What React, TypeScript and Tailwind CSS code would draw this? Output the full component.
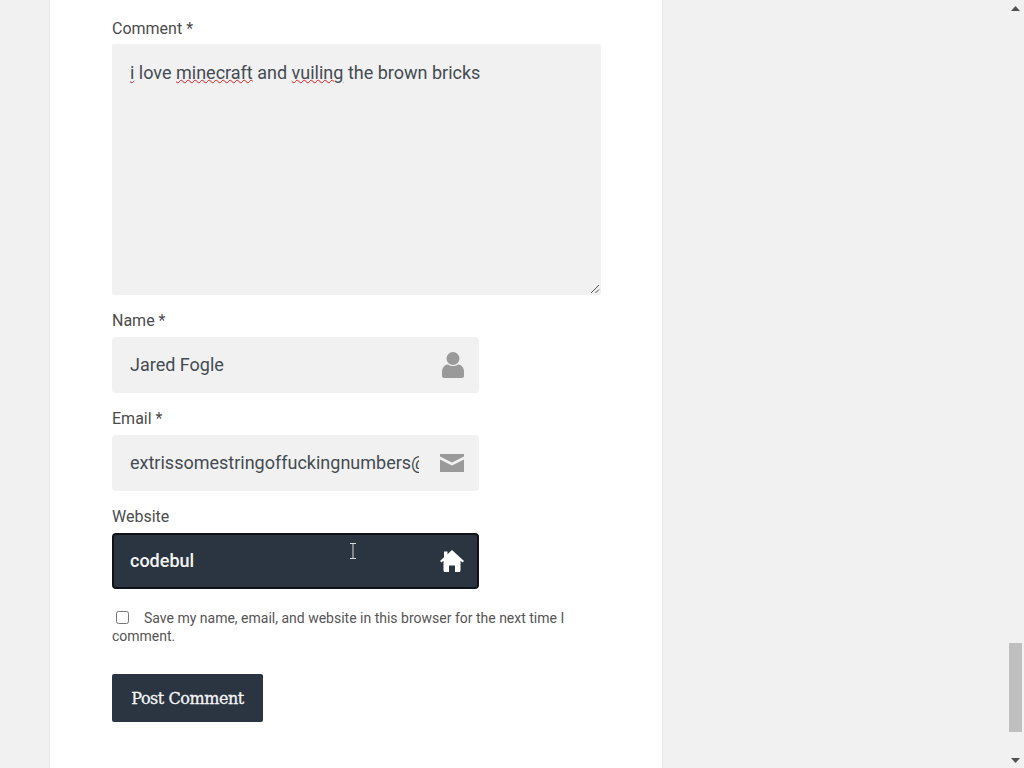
import React from "react";

const font = { fontFamily: '"Roboto", sans-serif' };

function Field({ label, value, icon, dark }: { label: string; value: string; icon: React.ReactNode; dark?: boolean }) {
  return (
    <div className="flex flex-col">
      <div className="h-[24px] text-[16px] leading-[24px] text-[#4b4b4b] mb-[4px]">{label}</div>
      <div
        className={
          dark
            ? "w-[367px] h-[56px] rounded-[4px] border-2 border-[#0f1216] bg-[#2a3541] pl-[16px] flex items-center relative"
            : "w-[367px] h-[56px] rounded-[4px] bg-[#f1f1f1] pl-[18px] flex items-center relative"
        }
      >
        <div className={dark ? "w-[289px] pb-[2px] overflow-hidden whitespace-nowrap text-[18px] font-medium text-[#f5f5f5]" : "w-[289px] pb-[2px] overflow-hidden whitespace-nowrap text-[18px] text-[#444b52]"}>
          {value}
        </div>
        <div className={dark ? "absolute right-[13px] top-0 bottom-0 flex items-center" : "absolute right-[15px] top-0 bottom-0 flex items-center"}>{icon}</div>
      </div>
    </div>
  );
}

const squiggle = "underline decoration-wavy decoration-[#e02020] decoration-[1px] underline-offset-[0px]";

export default function App() {
  return (
    <div className="flex h-[768px] w-[1024px] overflow-hidden bg-[#f1f1f1]" style={font}>
      <div className="flex-1 pl-[49px]">
        <div className="w-[614px] h-[768px] bg-white border-x border-[#e9e9e9] pl-[62px] pt-[17px] relative">
          <div className="h-[24px] text-[16px] leading-[24px] text-[#4b4b4b] mb-[3px]">Comment *</div>
          <div className="w-[489px] h-[251px] bg-[#f1f1f1] rounded-[2px] pl-[18px] pt-[15px] text-[18px] leading-[27px] text-[#444b52] relative">
            <span className={squiggle}>i</span>{" "}love{" "}
            <span className={squiggle}>minecraft</span>{" "}and{" "}
            <span className={squiggle}>vuiling</span>{" "}the brown bricks
            <svg className="absolute right-[1px] bottom-[1px]" width="10" height="10" viewBox="0 0 10 10" fill="none" stroke="#555" strokeWidth="1">
              <path d="M1 9L9 1M5.5 9L9 5.500" />
            </svg>
          </div>
          <div className="flex flex-col gap-[14px] mt-[14px]">
            <Field
              label="Name *"
              value="Jared Fogle"
              icon={
                <svg width="22" height="26" viewBox="0 0 22 26" fill="#9a9a9a">
                  <circle cx="11" cy="6.500" r="6.500" />
                  <path d="M0 20c0-4 2-7 6-7.500 1.500 1 3.200 1.500 5 1.500s3.500-.5 5-1.500c4 .5 6 3.500 6 7.500v4c0 1-1 2-2 2H2c-1 0-2-1-2-2z" />
                </svg>
              }
            />
            <Field
              label="Email *"
              value="extrissomestringoffuckingnumbers@gmail.com"
              icon={
                <svg width="24" height="18" viewBox="0 0 24 18" fill="#9a9a9a">
                  <path d="M0 0h24v2.500L12 8.500 0 2.500z" />
                  <path d="M0 5.500l12 6 12-6V18H0z" />
                </svg>
              }
            />
            <Field
              dark
              label="Website"
              value="codebul"
              icon={
                <svg width="24" height="22" viewBox="0 0 24 22" fill="#ffffff">
                  <path d="M12 0L24 11 22.500 12.500 20.500 10.700V20.500c0 .8-.5 1.500-1.500 1.500h-4v-6.500h-6V22H5c-1 0-1.500-.7-1.500-1.500V10.700L1.500 12.500 0 11 4 7.300V1.500h3.500v2.700z" />
                </svg>
              }
            />
          </div>
          <div className="w-[489px] mt-[20px] text-[14px] leading-[18px] text-[#555]">
            <input type="checkbox" className="w-[13px] h-[13px] ml-[4px] mr-[15px] align-[-1px]" />
            Save my name, email, and website in this browser for the next time I comment.
          </div>
          <div
            className="mt-[29px] w-[151px] h-[48px] rounded-[2px] bg-[#2a3541] text-[#f5f5f5] text-[16px] pt-[1px] flex items-center justify-center [-webkit-text-stroke:0.3px_#f5f5f5]"
            style={{ fontFamily: '"DejaVu Serif", serif', letterSpacing: "-0.45px" }}
          >
            Post Comment
          </div>
          <svg className="absolute left-[299px] top-[543px]" width="8" height="16" viewBox="0 0 8 16" fill="none" stroke="#d8d8d8" strokeWidth="1">
            <path d="M1 .5h6M1 15.500h6M4 .5v15" />
          </svg>
        </div>
      </div>
      <div className="w-[17px] h-[768px] flex flex-col items-center justify-between">
        <div className="h-[17px] flex items-center justify-center">
          <svg width="9" height="6" viewBox="0 0 9 6" fill="#505050"><path d="M4.500 0L9 5H0z" /></svg>
        </div>
        <div className="flex-1 w-full flex flex-col justify-end px-[2px] pb-[19px]">
          <div className="h-[89px] bg-[#bfbfbf]" />
        </div>
        <div className="h-[17px] flex items-center justify-center">
          <svg width="9" height="6" viewBox="0 0 9 6" fill="#505050"><path d="M4.500 6L9 1H0z" /></svg>
        </div>
      </div>
    </div>
  );
}
